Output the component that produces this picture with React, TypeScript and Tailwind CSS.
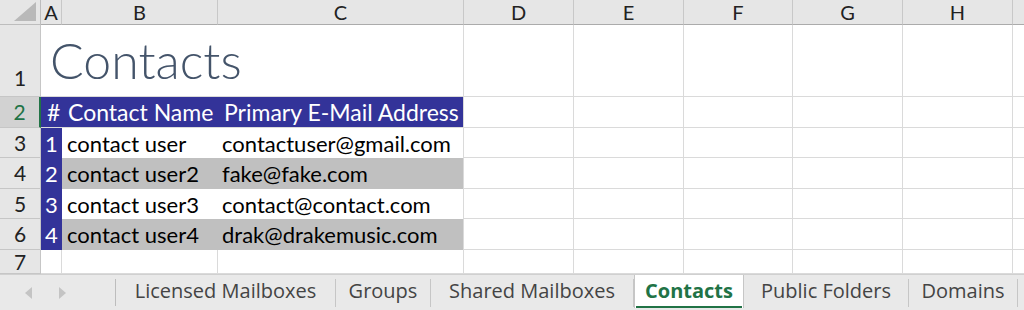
import React from 'react'

const font = { fontFamily: 'Lato, "Noto Sans", sans-serif' }

const columns = [
  { label: 'A', w: 'w-[21px]' },
  { label: 'B', w: 'w-[156px]' },
  { label: 'C', w: 'w-[246px]' },
  { label: 'D', w: 'w-[110px]' },
  { label: 'E', w: 'w-[110px]' },
  { label: 'F', w: 'w-[109px]' },
  { label: 'G', w: 'w-[110px]' },
  { label: 'H', w: 'w-[110px]' },
  { label: '', w: 'w-[60px]' },
]

const rest = columns.slice(3)

const contacts = [
  { n: 1, name: 'contact user', mail: 'contactuser@gmail.com', h: 'h-[30px]' },
  { n: 2, name: 'contact user2', mail: 'fake@fake.com', h: 'h-[31px]' },
  { n: 3, name: 'contact user3', mail: 'contact@contact.com', h: 'h-[30px]' },
  { n: 4, name: 'contact user4', mail: 'drak@drakemusic.com', h: 'h-[31px]' },
]

const tabs = [
  { label: 'Licensed Mailboxes', w: 'w-[220px]' },
  { label: 'Groups', w: 'w-[95px]' },
  { label: 'Shared Mailboxes', w: 'w-[203px]' },
  { label: 'Contacts', w: 'w-[110px]', active: true },
  { label: 'Public Folders', w: 'w-[165px]' },
  { label: 'Domains', w: 'w-[109px]' },
]

const RowHead = ({ n, active }: { n: number; active?: boolean }) => (
  <div
    className={
      active
        ? 'w-[41px] shrink-0 flex items-center justify-center text-[21px] bg-[#d2d2d2] text-[#217346] border-r-2 border-r-[#217346] border-b border-b-[#c6c6c6]'
        : 'w-[41px] shrink-0 flex items-center justify-center text-[21px] bg-[#e6e6e6] text-[#222] border-r border-b border-[#c6c6c6]'
    }
  >
    {n}
  </div>
)

const EmptyCells = () => (
  <>
    {rest.map((c, i) => (
      <div key={i} className={`${c.w} shrink-0 border-r border-b border-[#dadada] bg-white`} />
    ))}
  </>
)

export default function App() {
  return (
    <div className="w-[1024px] h-[310px] overflow-hidden flex flex-col bg-white text-[22px]" style={font}>
      <div className="flex-1 overflow-hidden flex flex-col">
        {/* column headers */}
        <div className="h-[25px] flex shrink-0">
          <div className="w-[41px] shrink-0 bg-[#e6e6e6] border-r border-b border-[#bdbdbd] flex items-end justify-end pr-[4px] pb-[3px]">
            <svg width="22" height="19" viewBox="0 0 22 19">
              <polygon points="22,0 22,19 0,19" fill="#b9b9b9" />
            </svg>
          </div>
          {columns.map((c, i) => (
            <div
              key={i}
              className={`${c.w} shrink-0 bg-[#e6e6e6] border-r border-b border-r-[#c8c8c8] border-b-[#ababab] flex items-center justify-center text-[20px] text-[#222]`}
            >
              {c.label}
            </div>
          ))}
        </div>

        {/* row 1: title */}
        <div className="h-[72px] flex shrink-0">
          <div className="w-[41px] shrink-0 flex items-end justify-center pb-[3px] text-[21px] bg-[#e6e6e6] text-[#222] border-r border-b border-[#c6c6c6]">1</div>
          <div className="w-[423px] shrink-0 border-r border-b border-[#dadada] flex items-end pl-[9px] pb-[11px]">
            <span className="text-[50px] leading-none font-light text-[#44546a]">Contacts</span>
          </div>
          <EmptyCells />
        </div>

        {/* row 2: table header */}
        <div className="h-[31px] flex shrink-0">
          <RowHead n={2} active />
          <div className="w-[423px] shrink-0 flex items-center bg-[#333399] text-white text-[23px] border-r border-b border-[#dadada]">
            <span className="w-[21px] pl-[6px]">#</span>
            <span className="w-[156px] pl-[6px]">Contact Name</span>
            <span className="pl-[6px]">Primary E-Mail Address</span>
          </div>
          <EmptyCells />
        </div>

        {contacts.map((c) => (
          <div key={c.n} className={`${c.h} flex shrink-0`}>
            <RowHead n={c.n + 2} />
            <div className="w-[21px] shrink-0 bg-[#333399] text-white flex items-center justify-center">{c.n}</div>
            <div
              className={`w-[402px] shrink-0 flex items-center text-black border-r border-[#dadada] ${
                c.n % 2 === 0 ? 'bg-[#c0c0c0]' : 'bg-white'
              }`}
            >
              <span className="w-[156px] pl-[5px]">{c.name}</span>
              <span className="pl-[4px]">{c.mail}</span>
            </div>
            <EmptyCells />
          </div>
        ))}

        {/* row 7 */}
        <div className="h-[24px] flex shrink-0">
          <RowHead n={7} />
          {columns.map((c, i) => (
            <div key={i} className={`${c.w} shrink-0 border-r border-b border-[#dadada]`} />
          ))}
        </div>
      </div>

      {/* sheet tabs */}
      <div
        className="h-[36px] shrink-0 flex bg-[#e9e9e9] border-t border-[#d0d0d0] text-[20px] text-[#444]"
        style={{ fontFamily: '"Open Sans", "Noto Sans", sans-serif' }}
      >
        <div className="w-[115px] shrink-0 flex items-center pl-[25px] gap-[27px]">
          <svg width="7" height="12" viewBox="0 0 7 12">
            <polygon points="7,0 7,12 0,6" fill="#c4c4c4" />
          </svg>
          <svg width="7" height="12" viewBox="0 0 7 12">
            <polygon points="0,0 0,12 7,6" fill="#c4c4c4" />
          </svg>
        </div>
        <div className="w-[1px] my-[4px] bg-[#bdbdbd]" />
        {tabs.map((t) =>
          t.active ? (
            <div
              key={t.label}
              className={`${t.w} shrink-0 mb-[2px] bg-white border-x border-[#c6c6c6] flex flex-col`}
            >
              <div className="flex-1 flex items-center justify-center font-bold text-[#217346]">{t.label}</div>
              <div className="h-[2px] mx-[1px] bg-[#217346]" />
            </div>
          ) : (
            <div key={t.label} className={`${t.w} shrink-0 flex items-center`}>
              <div className="flex-1 text-center pb-[3px]">{t.label}</div>
              <div className="w-[1px] h-[28px] bg-[#c6c6c6]" />
            </div>
          ),
        )}
      </div>
    </div>
  )
}
